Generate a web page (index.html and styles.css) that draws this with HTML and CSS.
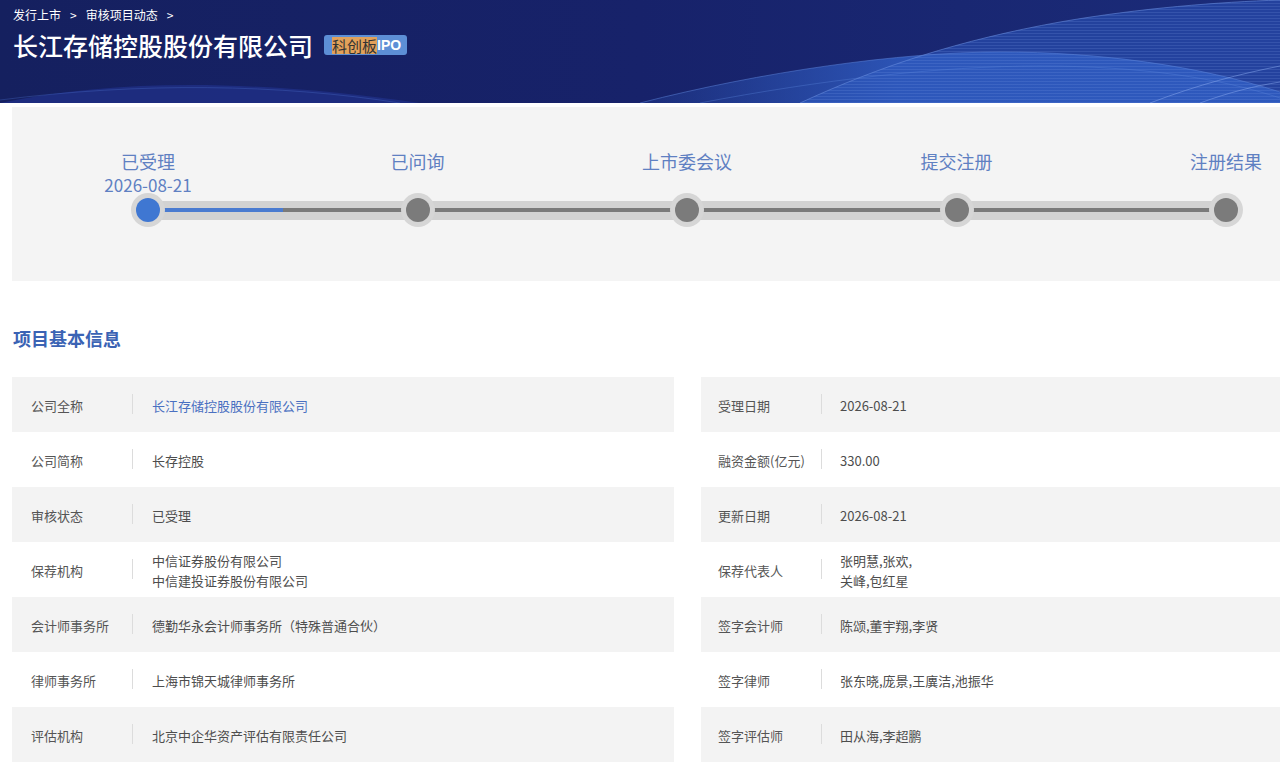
FILE: index.html
```html
<!DOCTYPE html>
<html lang="zh-CN">
<head>
    <meta charset="UTF-8">
    <meta name="viewport" content="width=device-width, initial-scale=1.0">
    <title>长江存储控股股份有限公司 - 审核项目动态</title>
    <link rel="stylesheet" href="styles.css">
</head>
<body>
    <div class="banner">
        <svg class="banner-waves" width="1280" height="103" viewBox="0 0 1280 103">
            <defs>
                <linearGradient id="wa" x1="0" y1="0" x2="1" y2="0">
                    <stop offset="0" stop-color="#2c55b6" stop-opacity="0.2"/>
                    <stop offset="0.4" stop-color="#2f5bc0" stop-opacity="0.85"/>
                    <stop offset="1" stop-color="#2f5bc0" stop-opacity="0.9"/>
                </linearGradient>
                <pattern id="stripes" width="6" height="3" patternUnits="userSpaceOnUse">
                    <rect width="6" height="1" fill="#7ea0e8" fill-opacity="0.18"/>
                </pattern>
            </defs>
            <path d="M0 103 C120 78 260 80 420 103 Z" fill="#1e2e82" opacity="0.9"/>
            <path d="M800 103 C880 66 960 40 1060 22 C1140 8 1220 2 1280 0 L1280 103 Z" fill="#2646a4" opacity="0.85"/>
            <path d="M640 103 C760 72 900 52 1000 52 C1100 52 1200 66 1280 92 L1280 103 Z" fill="url(#wa)"/>
            <path d="M800 103 C880 66 960 40 1060 22 C1140 8 1220 2 1280 0 L1280 103 Z" fill="url(#stripes)"/>
            <path d="M800 103 C880 66 960 40 1060 22 C1140 8 1220 2 1280 0" stroke="#6b90e0" stroke-opacity="0.55" fill="none"/>
            <path d="M640 103 C760 72 900 52 1000 52 C1100 52 1200 66 1280 92" stroke="#5d86dc" stroke-opacity="0.5" fill="none"/>
            <path d="M700 103 C820 80 940 66 1040 66 C1140 66 1220 78 1280 98" stroke="#5d86dc" stroke-opacity="0.35" fill="none"/>
            <path d="M1150 103 C1200 84 1240 74 1280 66" stroke="#8aaaf0" stroke-opacity="0.5" fill="none"/>
            <path d="M1200 103 C1230 92 1255 86 1280 82" stroke="#8aaaf0" stroke-opacity="0.5" fill="none"/>
            <path d="M0 100 C140 82 280 84 400 103" stroke="#4a6ec8" stroke-opacity="0.35" fill="none"/>
        </svg>
        <div class="breadcrumb">
            <span>发行上市</span>
            <span class="crumb-sep">&gt;</span>
            <span>审核项目动态</span>
            <span class="crumb-sep">&gt;</span>
        </div>
        <h1 class="company-title">
            长江存储控股股份有限公司
            <span class="badge"><span class="badge-board">科创板</span>IPO</span>
        </h1>
    </div>

    <div class="progress-panel">
        <div class="steps">
            <div class="step-label col-1"><span>已受理</span><span class="step-date">2026-08-21</span></div>
            <div class="step-label col-3">已问询</div>
            <div class="step-label col-5">上市委会议</div>
            <div class="step-label col-7">提交注册</div>
            <div class="step-label col-9">注册结果</div>

            <div class="dot dot-active"></div>
            <div class="track"><div class="track-line"><div class="track-done"></div></div></div>
            <div class="dot"></div>
            <div class="track"><div class="track-line"></div></div>
            <div class="dot"></div>
            <div class="track"><div class="track-line"></div></div>
            <div class="dot"></div>
            <div class="track"><div class="track-line"></div></div>
            <div class="dot"></div>
        </div>
    </div>

    <h2 class="section-title">项目基本信息</h2>

    <div class="info">
        <div class="info-table">
            <div class="info-row"><div class="info-label">公司全称</div><div class="info-value link">长江存储控股股份有限公司</div></div>
            <div class="info-row"><div class="info-label">公司简称</div><div class="info-value">长存控股</div></div>
            <div class="info-row"><div class="info-label">审核状态</div><div class="info-value">已受理</div></div>
            <div class="info-row"><div class="info-label">保荐机构</div><div class="info-value">中信证券股份有限公司<br>中信建投证券股份有限公司</div></div>
            <div class="info-row"><div class="info-label">会计师事务所</div><div class="info-value">德勤华永会计师事务所（特殊普通合伙）</div></div>
            <div class="info-row"><div class="info-label">律师事务所</div><div class="info-value">上海市锦天城律师事务所</div></div>
            <div class="info-row"><div class="info-label">评估机构</div><div class="info-value">北京中企华资产评估有限责任公司</div></div>
        </div>
        <div class="info-table info-right">
            <div class="info-row"><div class="info-label">受理日期</div><div class="info-value">2026-08-21</div></div>
            <div class="info-row"><div class="info-label">融资金额(亿元)</div><div class="info-value">330.00</div></div>
            <div class="info-row"><div class="info-label">更新日期</div><div class="info-value">2026-08-21</div></div>
            <div class="info-row"><div class="info-label">保荐代表人</div><div class="info-value">张明慧,张欢,<br>关峰,包红星</div></div>
            <div class="info-row"><div class="info-label">签字会计师</div><div class="info-value">陈颂,董宇翔,李贤</div></div>
            <div class="info-row"><div class="info-label">签字律师</div><div class="info-value">张东晓,庞景,王廙洁,池振华</div></div>
            <div class="info-row"><div class="info-label">签字评估师</div><div class="info-value">田从海,李超鹏</div></div>
        </div>
    </div>
</body>
</html>
```

FILE: styles.css
```css
body {
    margin: 0;
    width: 1280px;
    overflow: hidden;
    background-color: #fff;
    font-family: "Noto Sans CJK SC", "Noto Sans", sans-serif;
    color: #555;
}
.banner {
    position: relative;
    height: 103px;
    padding: 6px 0 0 13px;
    box-sizing: border-box;
    background: linear-gradient(90deg, #15205f 0%, #17226a 50%, #1b2c7a 100%);
    color: #fff;
    overflow: hidden;
}
.banner-waves {
    position: absolute;
    left: 0;
    top: 0;
}
.breadcrumb {
    position: relative;
    display: flex;
    align-items: center;
    gap: 9px;
    font-size: 12px;
    line-height: 18px;
}
.company-title {
    position: relative;
    display: flex;
    align-items: center;
    margin: 3px 0 0 0;
    font-size: 25px;
    font-weight: 500;
    line-height: 36px;
}
.badge {
    display: inline-flex;
    align-items: center;
    height: 20px;
    margin-left: 11px;
    padding: 0 6px 0 8px;
    border-radius: 3px;
    background-color: #5d8fd6;
    font-family: "Liberation Sans", "Noto Sans CJK SC", sans-serif;
    font-size: 14px;
    font-weight: bold;
}
.badge-board {
    background-color: #e2a15a;
    color: #333;
    font-family: "Noto Sans CJK SC", sans-serif;
    font-size: 15px;
    font-weight: normal;
    line-height: 17px;
}
.progress-panel {
    margin: 4px 0 0 12px;
    height: 174px;
    padding: 41px 37px 0 119px;
    box-sizing: border-box;
    background-color: #f4f4f4;
}
.steps {
    display: grid;
    grid-template-columns: 34px 1fr 34px 1fr 34px 1fr 34px 1fr 34px;
    grid-template-rows: 45px 34px;
    align-items: start;
}
.step-label {
    grid-row: 1;
    justify-self: center;
    display: flex;
    flex-direction: column;
    align-items: center;
    margin-top: 2px;
    white-space: nowrap;
    font-size: 18px;
    line-height: 22px;
    color: #5f80c2;
}
.step-date {
    margin-top: 3px;
    font-size: 17px;
    line-height: 20px;
}
.col-1 { grid-column: 1; }
.col-3 { grid-column: 3; }
.col-5 { grid-column: 5; }
.col-7 { grid-column: 7; }
.col-9 { grid-column: 9; }
.dot {
    grid-row: 2;
    width: 34px;
    height: 34px;
    border-radius: 50%;
    background-color: #d6d6d6;
    display: flex;
    align-items: center;
    justify-content: center;
    position: relative;
    z-index: 1;
}
.dot::after {
    content: "";
    width: 24px;
    height: 24px;
    border-radius: 50%;
    background-color: #7b7b7b;
}
.dot-active::after {
    background-color: #3f77d2;
}
.track {
    grid-row: 2;
    align-self: center;
    height: 19px;
    margin: 0 -12px;
    background-color: #d2d2d2;
    display: flex;
    align-items: center;
}
.track-line {
    flex: 1;
    height: 4px;
    background-color: #7a7a7a;
}
.track-done {
    width: 50%;
    height: 100%;
    background-color: #4a7bd0;
}
.section-title {
    margin: 43px 0 0 13px;
    font-size: 18px;
    font-weight: bold;
    line-height: 28px;
    color: #3b63b4;
}
.info {
    display: flex;
    gap: 27px;
    margin: 25px 0 0 12px;
}
.info-table {
    width: 662px;
    flex-shrink: 0;
}
.info-right {
    width: 600px;
}
.info-row {
    display: flex;
    align-items: center;
    height: 55px;
    padding-top: 2px;
    box-sizing: border-box;
    font-size: 13px;
    line-height: 20px;
}
.info-row:nth-child(odd) {
    background-color: #f3f3f3;
}
.info-label {
    position: relative;
    width: 121px;
    padding-left: 19px;
    box-sizing: border-box;
    color: #555;
}
.info-right .info-label {
    padding-left: 17px;
}
.info-label::after {
    content: "";
    position: absolute;
    right: 0;
    top: -2px;
    height: 20px;
    border-right: 1px solid #dcdcdc;
}
.info-value {
    padding-left: 19px;
    color: #4d4d4d;
}
.info-right .info-value {
    padding-left: 18px;
}
.link {
    color: #4a70c1;
}
```
